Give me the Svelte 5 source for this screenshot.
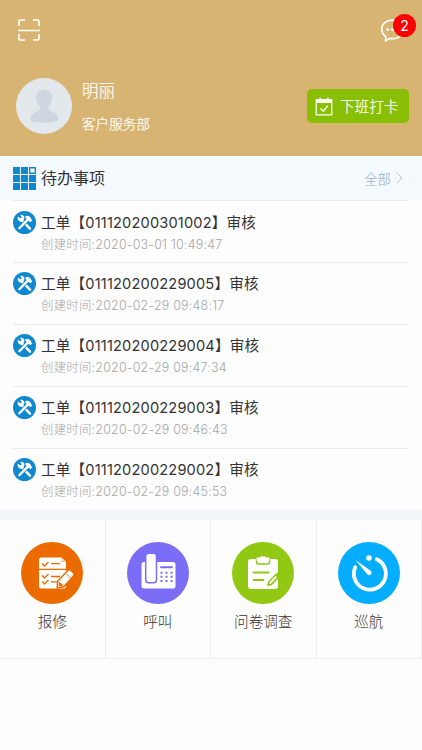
<script lang="ts">
	const orders = [
		{ code: '011120200301002', time: '2020-03-01 10:49:47' },
		{ code: '011120200229005', time: '2020-02-29 09:48:17' },
		{ code: '011120200229004', time: '2020-02-29 09:47:34' },
		{ code: '011120200229003', time: '2020-02-29 09:46:43' },
		{ code: '011120200229002', time: '2020-02-29 09:45:53' }
	];

	const actions = [
		{ name: 'repair', label: '报修' },
		{ name: 'call', label: '呼叫' },
		{ name: 'survey', label: '问卷调查' },
		{ name: 'patrol', label: '巡航' }
	];
</script>

<div class="page">
	<header>
		<div class="toolbar">
			<svg class="scan" viewBox="0 0 24 24">
				<path d="M2 8V3.500Q2 2 3.500 2H8M16 2h4.500Q22 2 22 3.500V8M2 16v4.500Q2 22 3.500 22H8M16 22h4.500Q22 22 22 20.500V16M1 12.500h22" />
			</svg>
			<div class="message">
				<svg viewBox="0 0 26 26">
					<path d="M13 2.200C6.500 2.200 1.800 6 1.800 11.500C1.800 15 3.400 17.500 6 19.200L5.800 23.700L10.600 21.200C18.500 22.500 24.200 18 24.200 11.800C24.200 6 19.500 2.200 13 2.200Z" />
					<g><circle cx="8" cy="12" r="1.600" /><circle cx="13" cy="12" r="1.600" /><circle cx="18" cy="12" r="1.600" /></g>
				</svg>
				<span class="badge">2</span>
			</div>
		</div>
		<div class="profile">
			<svg class="avatar" viewBox="0 0 56 56">
				<circle cx="28" cy="28" r="28" fill="#e3e8ec" />
				<path d="M28 11.500c-5 0-7.700 3.500-7.700 8 0 4.800 2 7.400 4 9.500.8 2-.3 3-3 4.200-4 1.500-7 3.300-7 7.400 0 3 5 4.100 14 4.100s14-1.100 14-4.100c0-4.100-3.500-5.900-7.200-7.400-2.700-1.200-3.700-2.200-2.900-4.200 2-2.100 3.800-4.700 3.800-9.500 0-4.500-3-8-8-8z" fill="#ced6df" />
			</svg>
			<div class="who">
				<div class="name">明丽</div>
				<div class="dept">客户服务部</div>
			</div>
			<button class="clock">
				<svg viewBox="0 0 18 19">
					<path d="M1.200 2.500h15.600v15.300H1.200z" fill="none" stroke="#fff" stroke-width="1.200" />
					<path d="M1 2h3l1 1.500L6 2h6l1 1.500L14 2h3v4H1zM4.500.5h1.300v2H4.500zM12.300.5h1.300v2h-1.300z" fill="#fff" />
					<path d="M5.500 11.500l2.800 2.800 4.500-5.500" fill="none" stroke="#fff" stroke-width="1.400" />
				</svg>
				<span>下班打卡</span>
			</button>
		</div>
	</header>

	<div class="heading">
		<svg class="tiles" viewBox="0 0 23 23">
			<path d="M0 0h7v7H0zM8 0h7v7H8zM0 8h7v7H0zM8 8h7v7H8zM16 8h7v7h-7zM0 16h7v7H0zM8 16h7v7H8zM16 16h7v7h-7z" fill="#0f88d0" />
			<path d="M16.700.7h5.600v5.600h-5.600z" fill="#fff" stroke="#0f88d0" stroke-width="1.400" />
		</svg>
		<h1>待办事项</h1>
		<div class="all">
			全部
			<svg viewBox="0 0 7 12"><path d="M.8.8L6 6 .8 11.200" /></svg>
		</div>
	</div>

	<div class="orders">
		{#each orders as order}
			<div class="order">
				<svg class="tool" viewBox="0 0 24 24">
					<circle cx="12" cy="12" r="12" fill="#0f88d0" />
					<path d="M8.300 8.800l9.400 9.700" stroke="#fff" stroke-width="2.600" stroke-linecap="round" />
					<path d="M5.200 5.800l2.400 2.100 1.700-1.500-1.900-2.300c2.800-.7 5.200 1.500 4.300 4.300L8.700 11.200C6 11.400 4.200 8.500 5.200 5.800z" fill="#fff" />
					<path d="M15.500 9L6.600 18" stroke="#0f88d0" stroke-width="4" />
					<path d="M15.200 9.300L6.600 18" stroke="#fff" stroke-width="2.400" stroke-linecap="round" />
					<path d="M12.200 6.300c1.800-1.600 3.700-1.700 5.100-.4l1.500 1.500.2 1.300 1.200 1-2 2.100-1.300-1.200-1.100-.1-2-2c.1-1.100-.5-1.800-1.600-2.200z" fill="#fff" />
				</svg>
				<div class="info">
					<div class="title">工单【{order.code}】审核</div>
					<div class="time">创建时间:{order.time}</div>
				</div>
			</div>
		{/each}
	</div>

	<div class="actions">
		{#each actions as action}
			<div class="action">
				<svg class={action.name} viewBox="0 0 62 62">
					<circle cx="31" cy="31" r="31" fill="currentColor" />
					{#if action.name == 'repair'}
						<path d="M20 15.500h20.500l4.500 4.500v24.500q0 2-2 2H20q-2 0-2-2v-27q0-2 2-2z" fill="#fff" />
						<path d="M40.500 15.500v4.500H45z" fill="#f8c9a4" />
						<path d="M18 27.300h27M21 21.500l2.500 2.500 4-4M21 33.500l2.500 2.500 4-4M21 39.500l2.500 2.500 4-4M30 21.700h9M30 34.500h9M30 39.800h6" fill="none" stroke="currentColor" stroke-width="1.300" />
						<path d="M37.500 39.500L47.500 28.800q1-.8 2 .2l2.500 2.500q.8 1-.1 1.900L42.500 44l-5.500 1z" fill="#fff" stroke="currentColor" stroke-width="3" />
						<path d="M37.500 39.500L47.500 28.800q1-.8 2 .2l2.500 2.500q.8 1-.1 1.900L42.500 44l-5.500 1z" fill="#fff" />
						<path d="M38.600 40.500l3.200 2.800-3.600.6zM45.500 32l4 4" fill="currentColor" stroke="currentColor" stroke-width=".9" />
					{:else if action.name == 'call'}
						<path d="M17 20h29q2.500 0 2.500 2.500v21.500q0 2.500-2.500 2.500H17q-2.500 0-2.500-2.500V22.500Q14.500 20 17 20z" fill="#fff" />
						<rect x="18.700" y="11.300" width="10.800" height="29.500" rx="3" fill="#fff" stroke="currentColor" stroke-width="1.500" />
						<path d="M34 25.200h11" stroke="currentColor" stroke-width="2" stroke-linecap="round" />
						<path d="M33.500 30.700h12.500M33.500 34.800h12.500M33.500 38.900h12.500" stroke="currentColor" stroke-width="2" stroke-dasharray="2 3" />
					{:else if action.name == 'survey'}
						<path d="M19 17h24q3 0 3 3v10L36 40l-.5 4 4-.8L46 37v7q0 3-3 3H19q-3 0-3-3V20q0-3 3-3z" fill="#fff" />
						<path d="M24.500 15.500h13v4.500q0 2-2 2h-9q-2 0-2-2z" fill="#fff" stroke="currentColor" stroke-width="1.500" />
						<path d="M24.500 16.500q0-1 1-1h2q.3-1 1.500-1h4q1.200 0 1.500 1h2q1 0 1 1v2h-13z" fill="#fff" />
						<path d="M21.500 30.500h15M21.500 38h10" stroke="currentColor" stroke-width="1.800" stroke-linecap="round" />
						<path d="M37 39.500l6.500-6.500 2.500 2.300-6.200 6.500-3.600 1z" fill="#fff" stroke="currentColor" stroke-width="1.300" />
					{:else}
						<path d="M17.200 25.200A16 16 0 1 0 38.800 17.200" fill="none" stroke="#fff" stroke-width="3.800" stroke-linecap="round" />
						<circle cx="31" cy="16" r="2.800" fill="#fff" />
						<path d="M17.500 18l15.200 10.700q1.800 1.900.2 3.700-1.700 1.700-3.700-.1z" fill="#fff" />
					{/if}
				</svg>
				<div>{action.label}</div>
			</div>
		{/each}
	</div>
</div>

<style>
	:global(body) {
		background-color: #fdfdfd;
	}

	.page {
		width: 422px;
		height: 750px;
		overflow: hidden;
		font-family: Inter, 'Noto Sans CJK SC', sans-serif;
		color: #333;
	}

	header {
		height: 156px;
		box-sizing: border-box;
		padding: 18px 13px 0 16px;
		background-color: #d8b473;
		color: #fff;
	}

	.toolbar {
		display: flex;
		justify-content: space-between;
		height: 60px;
		padding-left: 1px;
	}

	.scan {
		width: 24px;
		height: 24px;
		fill: none;
		stroke: #fff;
		stroke-width: 1.7;
	}

	.message {
		position: relative;
		width: 29px;
	}

	.message svg {
		width: 25px;
		height: 25px;
		fill: none;
		stroke: #fff;
		stroke-width: 1.7;
	}

	.message g {
		fill: #fff;
		stroke: none;
	}

	.badge {
		position: absolute;
		top: -4px;
		right: -7px;
		width: 23px;
		height: 23px;
		line-height: 24px;
		border-radius: 50%;
		background-color: #fe0000;
		font-size: 14px;
		text-align: center;
	}

	.profile {
		display: flex;
		align-items: center;
		height: 56px;
	}

	.avatar {
		width: 56px;
		height: 56px;
	}

	.who {
		flex: 1;
		padding-left: 10px;
	}

	.name {
		height: 35px;
		line-height: 26px;
		font-size: 16.500px;
		font-weight: 300;
	}

	.dept {
		height: 22px;
		line-height: 22px;
		font-size: 13.600px;
		font-weight: 300;
	}

	.name,
	.dept,
	.clock span {
		-webkit-text-stroke: 0.2px #fff;
	}

	.clock {
		display: flex;
		align-items: center;
		gap: 7px;
		width: 102px;
		height: 34px;
		padding: 0 0 0 8px;
		border: none;
		border-radius: 5px;
		background-color: #88bf03;
		color: #fff;
		font: inherit;
		font-size: 14.600px;
		font-weight: 300;
		white-space: nowrap;
	}

	.clock span {
		padding-bottom: 2px;
	}

	.clock svg {
		width: 18px;
		height: 19px;
		flex: none;
	}

	.heading {
		display: flex;
		align-items: center;
		height: 44px;
		padding: 0 19px 0 13px;
		background-color: #f4faff;
	}

	.tiles {
		width: 23px;
		height: 23px;
	}

	h1 {
		flex: 1;
		margin: 0 0 2px 5px;
		font-size: 16px;
		font-weight: 400;
	}

	.all {
		display: flex;
		align-items: center;
		gap: 5px;
		font-size: 13.400px;
		font-weight: 300;
		color: #93aec8;
	}

	.all svg {
		width: 7px;
		height: 12px;
		fill: none;
		stroke: #b7c5d0;
	}

	.orders {
		padding: 0 13px;
	}

	.order {
		display: flex;
		gap: 5px;
		height: 61.900px;
		box-sizing: border-box;
		padding-top: 9.500px;
		border-top: 1px solid #ebebed;
	}

	.order:last-child {
		height: 62.400px;
	}

	.tool {
		width: 23px;
		height: 23px;
		fill: none;
	}

	.title {
		height: 22px;
		padding-top: 1px;
		line-height: 23px;
		font-size: 14.600px;
		letter-spacing: 0.17px;
		white-space: nowrap;
	}

	.time {
		height: 20px;
		line-height: 21px;
		font-size: 12.400px;
		font-weight: 300;
		letter-spacing: 0.25px;
		color: #a6a6a6;
		white-space: nowrap;
	}

	.actions {
		display: grid;
		grid-template-columns: repeat(4, 1fr);
		height: 149px;
		box-sizing: border-box;
		border-top: 10px solid #f4f5f8;
		border-bottom: 1px solid #ededf0;
	}

	.action {
		display: flex;
		flex-direction: column;
		align-items: center;
		padding-top: 22px;
		border-right: 1px solid #ededf0;
		font-size: 14.600px;
		font-weight: 300;
		color: #333;
	}

	.action svg {
		width: 62px;
		height: 62px;
		margin-bottom: 6px;
	}

	.repair {
		color: #ec6b00;
	}

	.call {
		color: #7b6df5;
	}

	.survey {
		color: #91c813;
	}

	.patrol {
		color: #05adff;
	}
</style>
